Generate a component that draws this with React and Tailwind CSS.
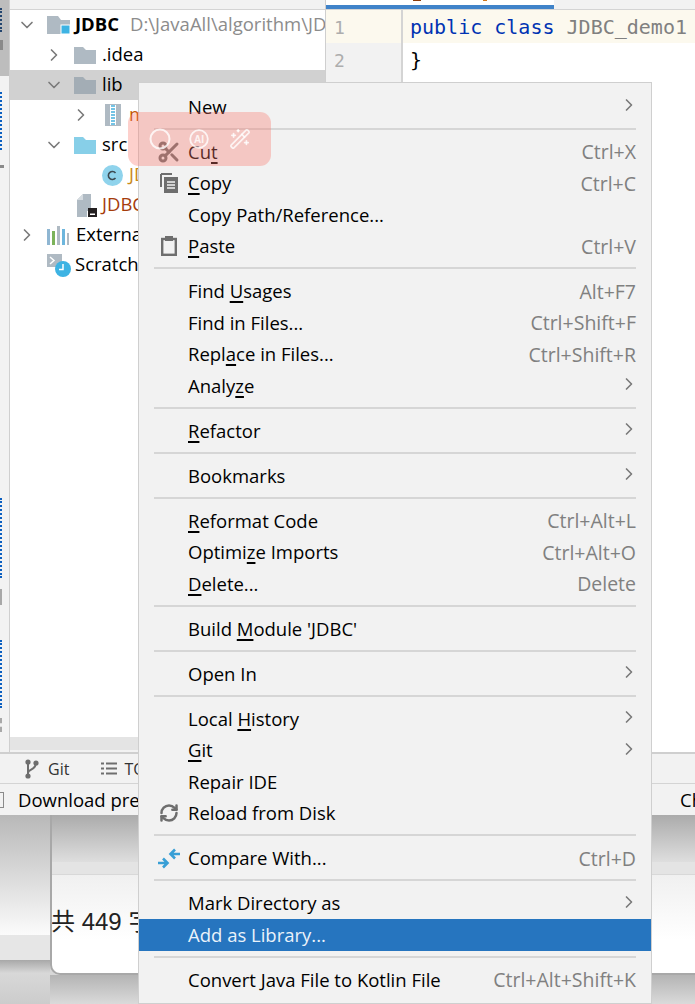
import React from "react";
import { ChevronRight, ChevronDown, Scissors, RefreshCw, WandSparkles } from "lucide-react";

const uiFont = "font-['Open_Sans',sans-serif]";

const Folder = ({ color = "#afbac3" }) => (
  <svg width="22" height="18" viewBox="0 0 22 18">
    <path d="M0 1h9l3 3h10v14H0z" fill={color} />
  </svg>
);

const Chevron = ({ open }) =>
  open ? (
    <ChevronDown size={20} strokeWidth={2} className="text-[#7a7a7a]" />
  ) : (
    <ChevronRight size={20} strokeWidth={2} className="text-[#7a7a7a]" />
  );

const ProjectIcon = () => (
  <svg width="23" height="22" viewBox="0 0 23 22">
    <path d="M0 2h11l3 4h9v14H0z" fill="#afbac3" />
    <rect x="14" y="11" width="9" height="9" fill="#3db3e3" stroke="#fff" />
  </svg>
);

const JarIcon = () => (
  <svg width="16" height="22" viewBox="0 0 16 22">
    <rect x="0" y="0" width="16" height="22" fill="#afbac3" />
    <rect x="5" y="1" width="6" height="20" fill="#fff" />
    <path d="M6 2h4M6 5h4M6 8h4M6 11h4M6 14h4M6 17h4M6 20h4" stroke="#45b0dd" strokeWidth="1.6" />
  </svg>
);

const ClassIcon = () => (
  <svg width="21" height="21" viewBox="0 0 21 21">
    <circle cx="10.5" cy="10.5" r="10.5" fill="#8fd3ec" />
    <path d="M13.5 8a4 4 0 1 0 0 5" fill="none" stroke="#3c4a52" strokeWidth="1.6" />
  </svg>
);

const ImlIcon = () => (
  <svg width="20" height="23" viewBox="0 0 20 23">
    <path d="M6 0h8v17H0V6z" fill="#afbac3" />
    <path d="M0 6h6V0z" fill="#d5dbe0" />
    <rect x="0" y="8" width="10" height="15" fill="#afbac3" />
    <rect x="11" y="14" width="9" height="9" fill="#231f20" />
    <rect x="13" y="19.5" width="5" height="1.5" fill="#fff" />
  </svg>
);

const LibsIcon = () => (
  <svg width="22" height="19" viewBox="0 0 22 19">
    <rect x="0" y="3" width="3" height="16" fill="#8fb6d2" />
    <rect x="5" y="5" width="3" height="14" fill="#7cb35a" />
    <rect x="10" y="0" width="3" height="19" fill="#afbac3" />
    <rect x="15" y="3" width="3" height="16" fill="#6db6dd" />
    <rect x="20" y="7" width="2" height="12" fill="#afbac3" />
  </svg>
);

const ScratchIcon = () => (
  <svg width="24" height="23" viewBox="0 0 24 23">
    <rect x="0" y="0" width="15" height="13" fill="#afbac3" />
    <path d="M3 3l4 3.5L3 10" fill="none" stroke="#fff" strokeWidth="1.5" />
    <circle cx="16" cy="15" r="8" fill="#3db3e3" />
    <path d="M16 10v5.5h-4" fill="none" stroke="#fff" strokeWidth="1.5" />
  </svg>
);

const CopyIcon = () => (
  <svg width="18" height="20" viewBox="0 0 18 20">
    <path d="M1 1h11M1 1v13" stroke="#6e6e6e" strokeWidth="2" fill="none" />
    <rect x="4" y="4" width="14" height="16" fill="#6e6e6e" />
    <path d="M7 9h8M7 12h8M7 15h8" stroke="#f2f2f2" strokeWidth="1.3" />
  </svg>
);

const PasteIcon = () => (
  <svg width="16" height="20" viewBox="0 0 16 20">
    <rect x="1.2" y="3" width="13.6" height="15.8" fill="none" stroke="#6e6e6e" strokeWidth="2.4" />
    <rect x="4" y="0" width="8" height="5" fill="#6e6e6e" />
  </svg>
);

const CompareIcon = () => (
  <svg width="22" height="21" viewBox="0 0 22 21">
    <path d="M0 15h8M5 10.5l4.5 4.5-4.5 4.5" fill="none" stroke="#389fd6" strokeWidth="2.6" />
    <path d="M22 6h-9M17 1.5L12.5 6l4.5 4.5" fill="none" stroke="#389fd6" strokeWidth="2.6" />
  </svg>
);

const GitIcon = () => (
  <svg width="14" height="20" viewBox="0 0 14 20">
    <circle cx="3" cy="3" r="2.6" fill="#6e6e6e" />
    <circle cx="3" cy="17" r="2.6" fill="#6e6e6e" />
    <circle cx="11" cy="4" r="2.6" fill="#6e6e6e" />
    <path d="M3 3v14M3 14c0-4 8-3 8-10" fill="none" stroke="#6e6e6e" strokeWidth="2" />
  </svg>
);

const ListIcon = () => (
  <svg width="16" height="13" viewBox="0 0 16 13">
    <path d="M0 1.5h3M5 1.5h11M0 6.5h3M5 6.5h11M0 11.5h3M5 11.5h11" stroke="#6e6e6e" strokeWidth="2" />
  </svg>
);

const tree = [
  { pad: "pl-[7px]", arrow: true, open: true, icon: <ProjectIcon />, il: "ml-[10px]", tl: "ml-[5px]", text: "JDBC", cls: "font-bold text-black", extra: "D:\\JavaAll\\algorithm\\JDBC" },
  { pad: "pl-[34px]", arrow: true, icon: <Folder />, il: "ml-[10px]", tl: "ml-[6px]", text: ".idea" },
  { pad: "pl-[34px]", arrow: true, open: true, icon: <Folder color="#a3adb5" />, il: "ml-[10px]", tl: "ml-[6px]", text: "lib", selected: true },
  { pad: "pl-[61px]", arrow: true, icon: <JarIcon />, il: "ml-[14px]", tl: "ml-[8px]", text: "mysql-connector-java.jar", cls: "text-[#c25400]" },
  { pad: "pl-[34px]", arrow: true, open: true, icon: <Folder color="#87cfe8" />, il: "ml-[10px]", tl: "ml-[6px]", text: "src" },
  { pad: "pl-[92px]", icon: <ClassIcon />, il: "", tl: "ml-[6px]", text: "JDBC_demo1", cls: "text-[#c98a1b]" },
  { pad: "pl-[67px]", icon: <ImlIcon />, il: "", tl: "ml-[5px]", text: "JDBC.iml", cls: "text-[#a53c0b]" },
  { pad: "pl-[7px]", arrow: true, icon: <LibsIcon />, il: "ml-[10px]", tl: "ml-[7px]", text: "External Libraries" },
  { pad: "pl-[37px]", icon: <ScratchIcon />, il: "", tl: "ml-[4px]", text: "Scratches and Consoles" },
];

const menu = [
  { label: "New", arrow: true },
  { sep: true },
  { label: "Cu_t", key2: "Ctrl+X", icon: <Scissors size={24} strokeWidth={3} className="text-[#6e6e6e]" /> },
  { label: "_Copy", key2: "Ctrl+C", icon: <CopyIcon /> },
  { label: "Copy Path/Reference..." },
  { label: "_Paste", key2: "Ctrl+V", icon: <PasteIcon /> },
  { sep: true },
  { label: "Find _Usages", key2: "Alt+F7" },
  { label: "Find in Files...", key2: "Ctrl+Shift+F" },
  { label: "Repl_ace in Files...", key2: "Ctrl+Shift+R" },
  { label: "Analy_ze", arrow: true },
  { sep: true },
  { label: "_Refactor", arrow: true },
  { sep: true },
  { label: "Bookmarks", arrow: true },
  { sep: true },
  { label: "_Reformat Code", key2: "Ctrl+Alt+L" },
  { label: "Optimi_ze Imports", key2: "Ctrl+Alt+O" },
  { label: "_Delete...", key2: "Delete" },
  { sep: true },
  { label: "Build _Module 'JDBC'" },
  { sep: true },
  { label: "Open In", arrow: true },
  { sep: true },
  { label: "Local _History", arrow: true },
  { label: "_Git", arrow: true },
  { label: "Repair IDE" },
  { label: "Reload from Disk", icon: <RefreshCw size={20} strokeWidth={3} className="text-[#6e6e6e]" /> },
  { sep: true },
  { label: "Compare With...", key2: "Ctrl+D", icon: <CompareIcon /> },
  { sep: true },
  { label: "Mark Directory as", arrow: true },
  { label: "Add as Library...", active: true },
  { sep: true },
  { label: "Convert Java File to Kotlin File", key2: "Ctrl+Alt+Shift+K" },
];

// "_" marks the mnemonic letter
const MenuLabel = ({ text }) => {
  const i = text.indexOf("_");
  if (i < 0) return <span>{text}</span>;
  return (
    <span>
      {text.slice(0, i)}
      <u className="underline decoration-[1.5px] underline-offset-[3px]">{text[i + 1]}</u>
      {text.slice(i + 2)}
    </span>
  );
};

const MenuRow = ({ item }) => (
  <div
    className={`relative flex items-center h-[31.5px] pl-[49px] pr-[15px] ${
      item.active ? "bg-[#2675bf] text-[#eaf2fa]" : "text-black"
    }`}
  >
    {item.icon && (
      <div className="absolute left-[18px] top-0 bottom-0 w-[24px] flex items-center justify-center">
        {item.icon}
      </div>
    )}
    <div className="flex-1 whitespace-nowrap text-[18.5px]">
      <MenuLabel text={item.label} />
    </div>
    {item.key2 && <div className="text-[#808080] text-[19.5px]">{item.key2}</div>}
    {item.arrow && <ChevronRight size={20} strokeWidth={2} className="text-[#7a7a7a] -mr-[3px] -mt-[3px]" />}
  </div>
);

const ContextMenu = () => (
  <div className="absolute left-[138px] top-[82px] w-[514px] h-[922px] pt-[8px] bg-[#f2f2f2] border border-[#cfcfcf]">
    {menu.map((item, i) =>
      item.sep ? (
        <div key={i} className="h-[13.5px] pt-[5px] pl-[15px] pr-[15px]">
          <div className="h-[2px] bg-[#d6d6d6]" />
        </div>
      ) : (
        <MenuRow key={i} item={item} />
      )
    )}
  </div>
);

const SideLabels = () => (
  <div className="relative w-[10px] shrink-0 bg-[#f2f2f2] border-r border-[#cfcfcf] overflow-hidden">
    <div className="h-[76px] bg-[#bdbdbd] flex flex-col items-start gap-[8px] pt-[8px]">
      <div className="w-[3px] h-[24px] border-l-2 border-dotted border-[#23456e]" />
      <div className="w-[3px] h-[10px] bg-[#8a8a8a]" />
    </div>
    <div className="absolute left-0 top-[92px] w-[2px] h-[58px] border-l-2 border-dotted border-[#0b5fc0]" />
    <div className="absolute left-0 top-[165px] w-[4px] h-[3px] bg-[#8a8a8a]" />
    <div className="absolute left-0 top-[498px] w-[2px] h-[80px] border-l-2 border-dotted border-[#0b5fc0]" />
    <div className="absolute left-0 top-[589px] w-[2px] h-[16px] bg-[#a8a8a8]" />
    <div className="absolute left-0 top-[640px] w-[2px] h-[68px] border-l-2 border-dotted border-[#0b5fc0]" />
    <div className="absolute left-0 top-[718px] w-[2px] h-[14px] border-l-2 border-dashed border-[#a8a8a8]" />
  </div>
);

const ProjectTree = () => (
  <div className="w-[315px] shrink-0 flex flex-col bg-white overflow-hidden">
    <div className="h-[10px] shrink-0 bg-[#f2f2f2] border-b border-[#d4d4d4]" />
    <div className="flex-1 text-[18.5px] text-black">
      {tree.map((row, i) => (
        <div
          key={i}
          className={`flex items-center h-[30px] whitespace-nowrap ${row.pad} ${row.selected ? "bg-[#d1d1d1]" : ""}`}
        >
          {row.arrow && (
            <div className="w-[20px] shrink-0 flex justify-center">
              <Chevron open={row.open} />
            </div>
          )}
          <div className={`shrink-0 flex items-center ${row.il}`}>{row.icon}</div>
          <span className={`mb-[2px] ${row.tl} ${row.cls || ""}`}>{row.text}</span>
          {row.extra && <span className="mb-[2px] ml-[11px] text-[#8c8c8c]">{row.extra}</span>}
        </div>
      ))}
    </div>
    <div className="h-[13px] shrink-0 bg-[#e4e4e4]" />
    <div className="h-[2px] shrink-0 bg-[#f2f2f2]" />
  </div>
);

const Editor = () => (
  <div className="flex-1 flex flex-col border-l border-[#cfcfcf] bg-white font-['DejaVu_Sans_Mono',monospace] text-[20px]">
    <div className="relative h-[10px] shrink-0 flex bg-[#f2f2f2] border-b border-[#d4d4d4]">
      <div className="relative w-[228px] h-full flex flex-col">
        <div className="h-[5px] bg-white" />
        <div className="h-[5px] bg-[#4083c9]" />
        <div className="absolute left-[87px] top-0 w-[8px] h-[1px] bg-[#8c3b0b]" />
        <div className="absolute left-[157px] top-0 w-[4px] h-[1px] bg-[#d0761c]" />
      </div>
    </div>
    <div className="flex-1 flex">
      <div className="w-[77px] shrink-0 flex flex-col bg-[#f2f2f2] border-r-2 border-[#d4d4d4] text-[#adadad] text-[18px]">
        <div className="h-[33px] pl-[8px] pt-[1px] flex items-center bg-[#fcf9ee]">1</div>
        <div className="h-[33px] pl-[8px] pt-[1px] flex items-center">2</div>
      </div>
      <div className="flex-1 pl-[7px]">
        <div className="h-[33px] -ml-[7px] pl-[7px] pt-[1px] flex items-center bg-[#fcf9ee] whitespace-pre overflow-hidden">
          <span className="text-[#0033b3]">public class </span>
          <span className="text-[#808080]">JDBC_demo1</span>
        </div>
        <div className="h-[33px] pt-[1px] flex items-center text-black">{"}"}</div>
      </div>
    </div>
  </div>
);

const ToolBars = () => (
  <div className="text-[16px]">
    <div className="h-[32px] flex items-center bg-[#f2f2f2] border-t-2 border-b border-t-[#cfcfcf] border-b-[#d4d4d4] pl-[25px] text-[#333]">
      <GitIcon />
      <span className="ml-[9px]">Git</span>
      <div className="ml-[32px]">
        <ListIcon />
      </div>
      <span className="ml-[7px]">TODO</span>
    </div>
    <div className="h-[31px] flex items-center bg-[#f2f2f2] text-[18.5px] text-black whitespace-nowrap">
      <div className="w-[4px] h-[16px] border-y border-r border-[#8a8a8a]" />
      <div className="ml-[14px] flex-1 overflow-hidden">Download pre-built shared indexes</div>
      <div className="w-[15px] overflow-hidden">Checking</div>
    </div>
  </div>
);

const BlurredPage = () => (
  <div className="flex-1 flex bg-[linear-gradient(#c0c0c0,#dcdcdc)] font-['Liberation_Sans','Noto_Sans_CJK_SC',sans-serif]">
    <div className="w-[50px] shrink-0 flex flex-col">
      <div className="h-[120px] bg-[linear-gradient(#b8b8b8,#fbfbfb)]" />
      <div className="h-[25px] bg-[#e6e6e6]" />
      <div className="flex-1 bg-[linear-gradient(#a8a8a8,#d8d8d8_30%,#cccccc)]" />
    </div>
    <div className="flex-1 flex flex-col">
      <div className="h-[160px] flex flex-col border-l-2 border-b-2 border-[#a8a8a8] rounded-bl-[10px] overflow-hidden bg-white">
        <div className="h-[47px] shrink-0 bg-[linear-gradient(#ababab,#dedede)]" />
        <div className="h-[13px] shrink-0 bg-[#e4e4e4] border-b border-[#d8d8d8]" />
        <div className="h-[65px] shrink-0 -ml-[1px] bg-[linear-gradient(#f0f0f0,#ffffff)] flex items-end text-[24px] text-[#222]">
          共 449 字
        </div>
      </div>
      <div className="flex-1 bg-[linear-gradient(#b4b4b4,#dadada)]" />
    </div>
  </div>
);

const AiBubble = () => (
  <div className="absolute left-[128px] top-[112px] w-[143px] h-[54px] rounded-[11px] bg-[rgba(250,120,110,0.35)] flex items-center text-white/80">
    <svg width="22" height="22" viewBox="0 0 22 22" className="ml-[21px]">
      <circle cx="11" cy="11" r="9.5" fill="none" stroke="currentColor" strokeWidth="2" />
    </svg>
    <svg width="20" height="20" viewBox="0 0 20 20" className="ml-[18px]">
      <circle cx="10" cy="10" r="8.8" fill="none" stroke="currentColor" strokeWidth="1.8" />
      <text x="10" y="14" textAnchor="middle" fontSize="10" fontWeight="700" fill="currentColor" fontFamily="Liberation Sans">AI</text>
    </svg>
    <WandSparkles size={22} strokeWidth={1.8} className="ml-[20px]" />
  </div>
);

export default function App() {
  return (
    <div className={`relative w-[695px] h-[1004px] overflow-hidden flex flex-col bg-white ${uiFont}`}>
      <div className="h-[752px] shrink-0 flex">
        <SideLabels />
        <ProjectTree />
        <Editor />
      </div>
      <ToolBars />
      <BlurredPage />
      <ContextMenu />
      <AiBubble />
    </div>
  );
}
